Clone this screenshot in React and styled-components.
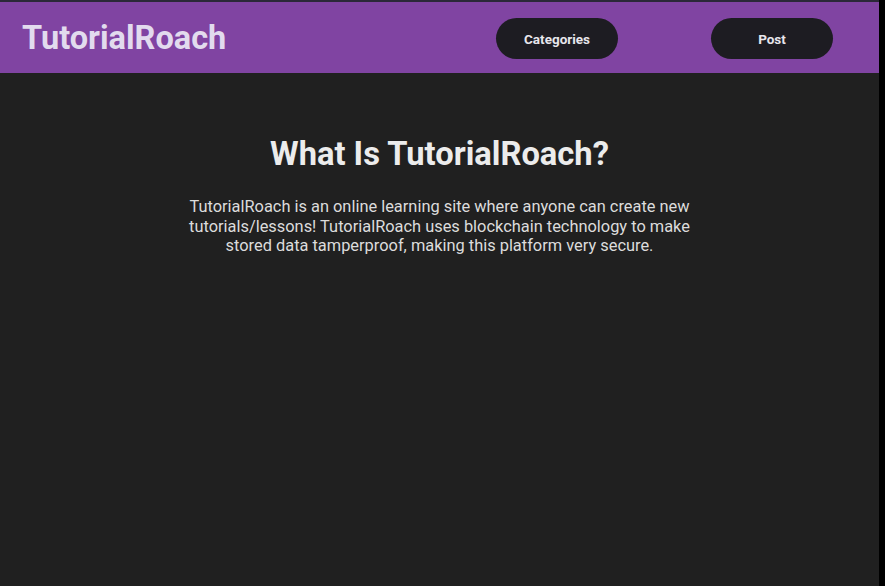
import React from 'react';
import styled, { createGlobalStyle } from 'styled-components';

const GlobalStyle = createGlobalStyle`
  html, body {
    margin: 0;
    padding: 0;
    background: #000;
  }
  body {
    font-family: Roboto, "Liberation Sans", Arial, sans-serif;
  }
`;

function App() {
  return (
    <>
      <GlobalStyle />
      <Frame>
        <Header>
          <Logo>TutorialRoach</Logo>
          <Nav>
            <NavButton>Categories</NavButton>
            <NavButton>Post</NavButton>
          </Nav>
        </Header>
        <Main>
          <Title>What Is TutorialRoach?</Title>
          <Intro>
            TutorialRoach is an online learning site where anyone can create new
            tutorials/lessons! TutorialRoach uses blockchain technology to make
            stored data tamperproof, making this platform very secure.
          </Intro>
        </Main>
      </Frame>
    </>
  );
}

const Frame = styled.div`
  width: 879px;
  min-height: 584px;
  background-color: #202020;
  border-top: 2px solid #2b2838;
  display: flex;
  flex-direction: column;
`;

const Header = styled.header`
  height: 71px;
  display: flex;
  align-items: center;
  justify-content: space-between;
  padding: 0 46px 0 22px;
  background-color: #8044a2;
  box-sizing: border-box;
`;

const Logo = styled.h1`
  margin: 0;
  color: #e2dbee;
  font-size: 32.5px;
  font-weight: bold;
`;

const Nav = styled.nav`
  display: flex;
  gap: 93px;
  margin-top: 2px;
`;

const NavButton = styled.button`
  width: 122px;
  height: 41px;
  background-color: #1d1c22;
  color: #e8e6ec;
  font-family: Roboto, "Liberation Sans", Arial, sans-serif;
  font-size: 13.5px;
  font-weight: bold;
  border: 0;
  border-radius: 21px;
  outline: 0;
  cursor: pointer;
`;

const Main = styled.main`
  display: flex;
  flex-direction: column;
  align-items: center;
  padding-top: 62px;
`;

const Title = styled.h2`
  margin: 0 0 24px;
  color: #ececec;
  font-size: 32.7px;
  font-weight: bold;
`;

const Intro = styled.p`
  width: 540px;
  margin: 0;
  color: #dcdcdc;
  font-size: 16.4px;
  line-height: 19.5px;
  text-align: center;
`;

export default App;
